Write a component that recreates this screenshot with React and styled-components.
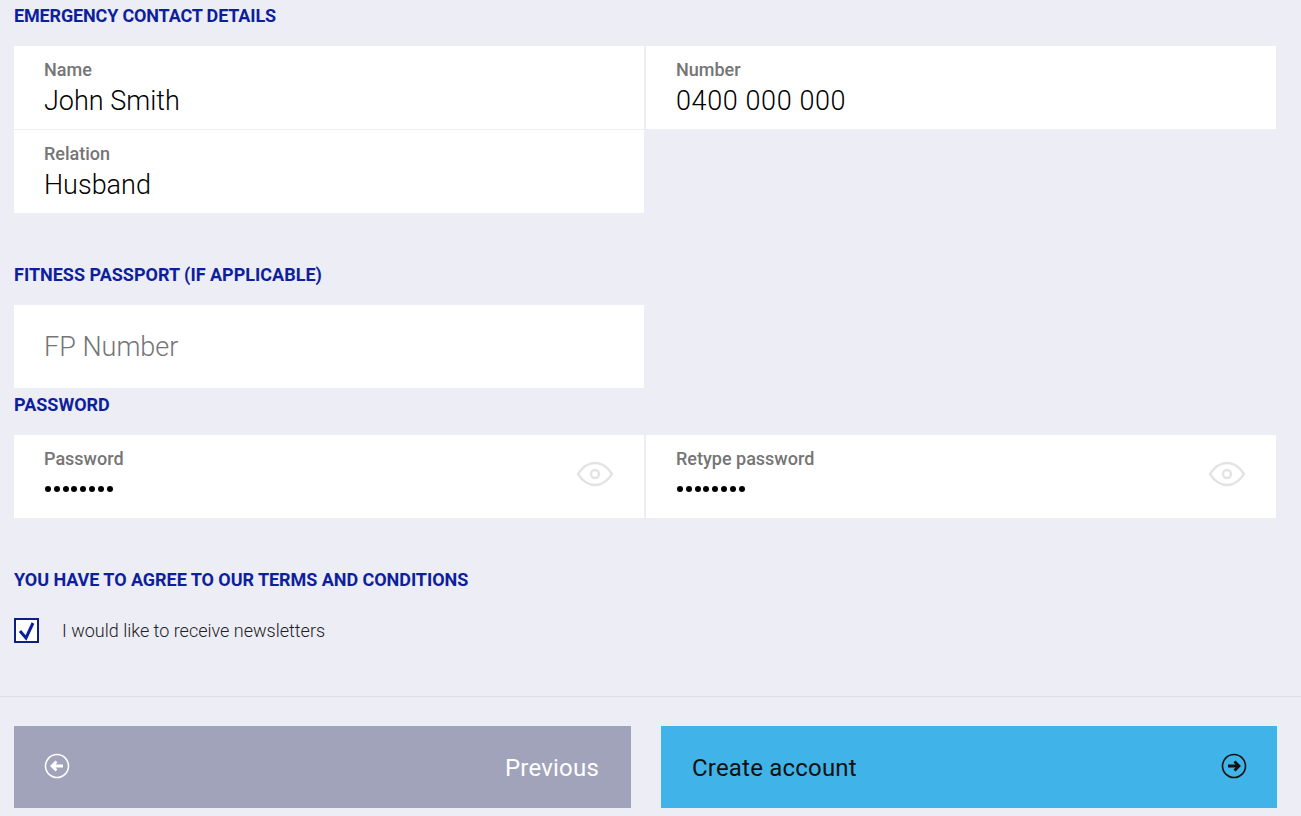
import styled, { createGlobalStyle } from 'styled-components'

const GlobalStyle = createGlobalStyle`
  html, body {
    margin: 0;
    padding: 0;
    background: #ecedf5;
    font-family: Roboto, "Liberation Sans", sans-serif;
  }
`

const Page = styled.div`
  width: 1301px;
  height: 816px;
  overflow: hidden;
  background: #ecedf5;
`

const Form = styled.div`
  padding: 0 14px;
  height: 697px;
  box-sizing: border-box;
  border-bottom: 1px solid #dcdde5;
`

const Heading = styled.h2`
  margin: 0;
  font-size: 18px;
  line-height: 20px;
  font-weight: 700;
  letter-spacing: ${(props) => props.spacing || 0}px;
  color: #0e1f9c;
  padding-top: ${(props) => props.top}px;
  padding-bottom: ${(props) => props.bottom}px;
`

const FieldGrid = styled.div`
  display: grid;
  grid-template-columns: 630px 630px;
  column-gap: 2px;
  row-gap: 1px;
`

const Field = styled.div`
  position: relative;
  height: 83px;
  box-sizing: border-box;
  padding: 14px 30px 0;
  background: #fff;
`

const Label = styled.div`
  font-size: 18px;
  line-height: 20px;
  font-weight: 500;
  color: #757575;
`

const Value = styled.div`
  margin-top: 5px;
  font-size: 27px;
  line-height: 32px;
  font-weight: 300;
  letter-spacing: ${(props) => props.spacing || 0}px;
  color: #000;
`

const Placeholder = styled.div`
  font-size: 27px;
  line-height: 83px;
  font-weight: 300;
  color: #757575;
  margin-top: -13px;
`

const Dots = styled.div`
  display: flex;
  gap: 2.8px;
  margin-top: 17px;
  margin-left: 1px;
`

const Dot = styled.span`
  width: 6px;
  height: 6px;
  border-radius: 50%;
  background: #000;
`

const EyeButton = styled.span`
  position: absolute;
  top: 26px;
  right: 30px;
  display: flex;
`

const CheckRow = styled.div`
  display: flex;
  align-items: flex-start;
  gap: 23px;
`

const Box = styled.span`
  display: flex;
  width: 25px;
  height: 25px;
  box-sizing: border-box;
  border: 2px solid #0e1f80;
  background: #fff;
`

const CheckLabel = styled.span`
  font-size: 18px;
  line-height: 26px;
  font-weight: 300;
  color: #222;
`

const Actions = styled.div`
  display: flex;
  gap: 30px;
  padding: 29px 0 0 14px;
`

const ActionButton = styled.button`
  display: flex;
  align-items: center;
  justify-content: space-between;
  width: ${(props) => props.w}px;
  height: 82px;
  box-sizing: border-box;
  padding: ${(props) => props.pad};
  border: 0;
  font-family: inherit;
  font-size: 24px;
  font-weight: 400;
  letter-spacing: 0.2px;
  color: ${(props) => props.fg};
  background: ${(props) => props.bg};
`

const ButtonText = styled.span`
  padding-top: 2px;
`

const ArrowIcon = styled.svg`
  display: block;
  margin-top: -3px;
`

const Eye = () => (
  <svg width="38" height="26" viewBox="0 0 38 26" fill="none" stroke="#e3e3e3" strokeWidth="2.4">
    <path d="M2 13 C8 4 13 2 19 2 C25 2 30 4 36 13 C30 22 25 24 19 24 C13 24 8 22 2 13 Z" />
    <circle cx="19" cy="13" r="4" />
  </svg>
)

const Arrow = ({ color, dir }) => (
  <ArrowIcon width="26" height="26" viewBox="0 0 26 26" fill="none" stroke={color}>
    <circle cx="13" cy="13" r="11.5" strokeWidth="1.6" />
    {dir === 'left' ? (
      <path d="M19 13 H8 M12.5 8.5 L8 13 L12.5 17.5" strokeWidth="2.8" />
    ) : (
      <path d="M7 13 H18 M13.5 8.5 L18 13 L13.5 17.5" strokeWidth="2.8" />
    )}
  </ArrowIcon>
)

const PasswordField = ({ label }) => (
  <Field>
    <Label>{label}</Label>
    <Dots>
      {[...Array(8).keys()].map((i) => (
        <Dot key={i} />
      ))}
    </Dots>
    <EyeButton>
      <Eye />
    </EyeButton>
  </Field>
)

const App = () => (
  <Page>
    <GlobalStyle />
    <Form>
      <Heading top={6} bottom={20} spacing={-0.16}>EMERGENCY CONTACT DETAILS</Heading>
      <FieldGrid>
        <Field>
          <Label>Name</Label>
          <Value>John Smith</Value>
        </Field>
        <Field>
          <Label>Number</Label>
          <Value spacing={0.6}>0400 000 000</Value>
        </Field>
        <Field>
          <Label>Relation</Label>
          <Value>Husband</Value>
        </Field>
      </FieldGrid>
      <Heading top={52} bottom={20}>FITNESS PASSPORT (IF APPLICABLE)</Heading>
      <FieldGrid>
        <Field>
          <Placeholder>FP Number</Placeholder>
        </Field>
      </FieldGrid>
      <Heading top={7} bottom={20}>PASSWORD</Heading>
      <FieldGrid>
        <PasswordField label="Password" />
        <PasswordField label="Retype password" />
      </FieldGrid>
      <Heading top={52} bottom={28} spacing={-0.05}>YOU HAVE TO AGREE TO OUR TERMS AND CONDITIONS</Heading>
      <CheckRow>
        <Box>
          <svg width="21" height="21" viewBox="0 0 21 21" fill="none" stroke="#0e1f9c" strokeWidth="3">
            <path d="M4 11 L10 18 L17 3" />
          </svg>
        </Box>
        <CheckLabel>I would like to receive newsletters</CheckLabel>
      </CheckRow>
    </Form>
    <Actions>
      <ActionButton w={617} bg="#a1a3ba" fg="#fff" pad="0 32px 0 30px">
        <Arrow color="#fff" dir="left" />
        <ButtonText>Previous</ButtonText>
      </ActionButton>
      <ActionButton w={616} bg="#40b4e8" fg="#111" pad="0 30px 0 31px">
        <ButtonText>Create account</ButtonText>
        <Arrow color="#111" dir="right" />
      </ActionButton>
    </Actions>
  </Page>
)

export default App
